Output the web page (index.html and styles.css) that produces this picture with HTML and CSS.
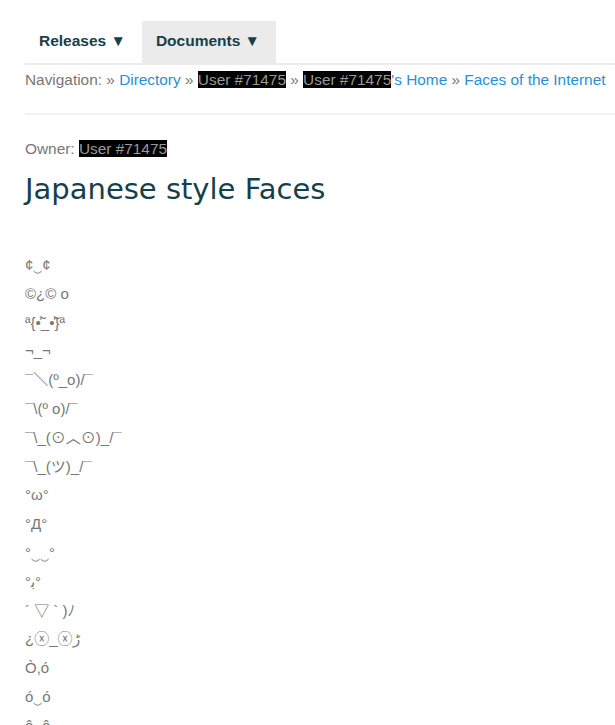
FILE: index.html
```html
<!DOCTYPE html>
<html>
<head>
<meta charset="utf-8">
<link rel="stylesheet" href="styles.css">
</head>
<body>
<div class="page">
  <nav class="tabs">
    <div class="tab">Releases ▼</div>
    <div class="tab active">Documents ▼</div>
  </nav>
  <div class="crumbs">Navigation: » <a>Directory</a> » <span class="mask">User #71475</span> » <a><span class="mask">User #71475</span>'s Home</a> » <a>Faces of the Internet</a></div>
  <hr class="sep">
  <div class="owner">Owner: <span class="mask">User #71475</span></div>
  <h1 class="title">Japanese style Faces</h1>
  <div class="faces">
    <div class="face">¢‿¢</div>
    <div class="face">©¿© o</div>
    <div class="face">ª{•̃̾_•̃̾}ª</div>
    <div class="face">¬_¬</div>
    <div class="face">¯＼(º_o)/¯</div>
    <div class="face">¯\(º o)/¯</div>
    <div class="face">¯\_(⊙︿⊙)_/¯</div>
    <div class="face">¯\_(ツ)_/¯</div>
    <div class="face">°ω°</div>
    <div class="face">°Д°</div>
    <div class="face">°‿‿°</div>
    <div class="face">°ﺑ°</div>
    <div class="face">´ ▽ ` )ﾉ</div>
    <div class="face">¿ⓧ_ⓧﮌ</div>
    <div class="face">Ò,ó</div>
    <div class="face">ó‿ó</div>
    <div class="face">ô⌐ô</div>
  </div>
</div>
</body>
</html>
```
FILE: styles.css
```css
html, body { margin: 0; padding: 0; background: #fff; }
body { font-family: "Liberation Sans", Arial, sans-serif; overflow: hidden; }
.page { padding-left: 25px; padding-top: 21px; }
.tabs { display: flex; border-bottom: 2px solid #ececec; }
.tab {
  height: 42px; line-height: 40px; padding: 0 16px 0 14px;
  font-weight: bold; font-size: 15.5px; color: #17404a;
}
.tab.active { background: #ebebeb; }
.crumbs { font-size: 15.4px; color: #777; line-height: 17px; margin-top: 6px; white-space: nowrap; }
.crumbs a { color: #2b8fd6; }
.mask { background: #000; color: #999; }
.sep { border: 0; border-top: 2px solid #f1f1f1; margin: 25px 0 0 0; }
.owner { font-size: 15.4px; color: #777; margin-top: 26px; line-height: 16px; }
.title {
  font-family: "DejaVu Sans", Verdana, sans-serif; font-weight: normal;
  font-size: 29px; color: #173f4a; margin: 14px 0 0 0; line-height: 36px;
}
.faces { margin-top: 50px; font-size: 15px; color: #777; font-family: "Liberation Sans", "Noto Sans CJK JP", sans-serif; }
.face { height: 28.8px; line-height: 16px; white-space: nowrap; }
```
